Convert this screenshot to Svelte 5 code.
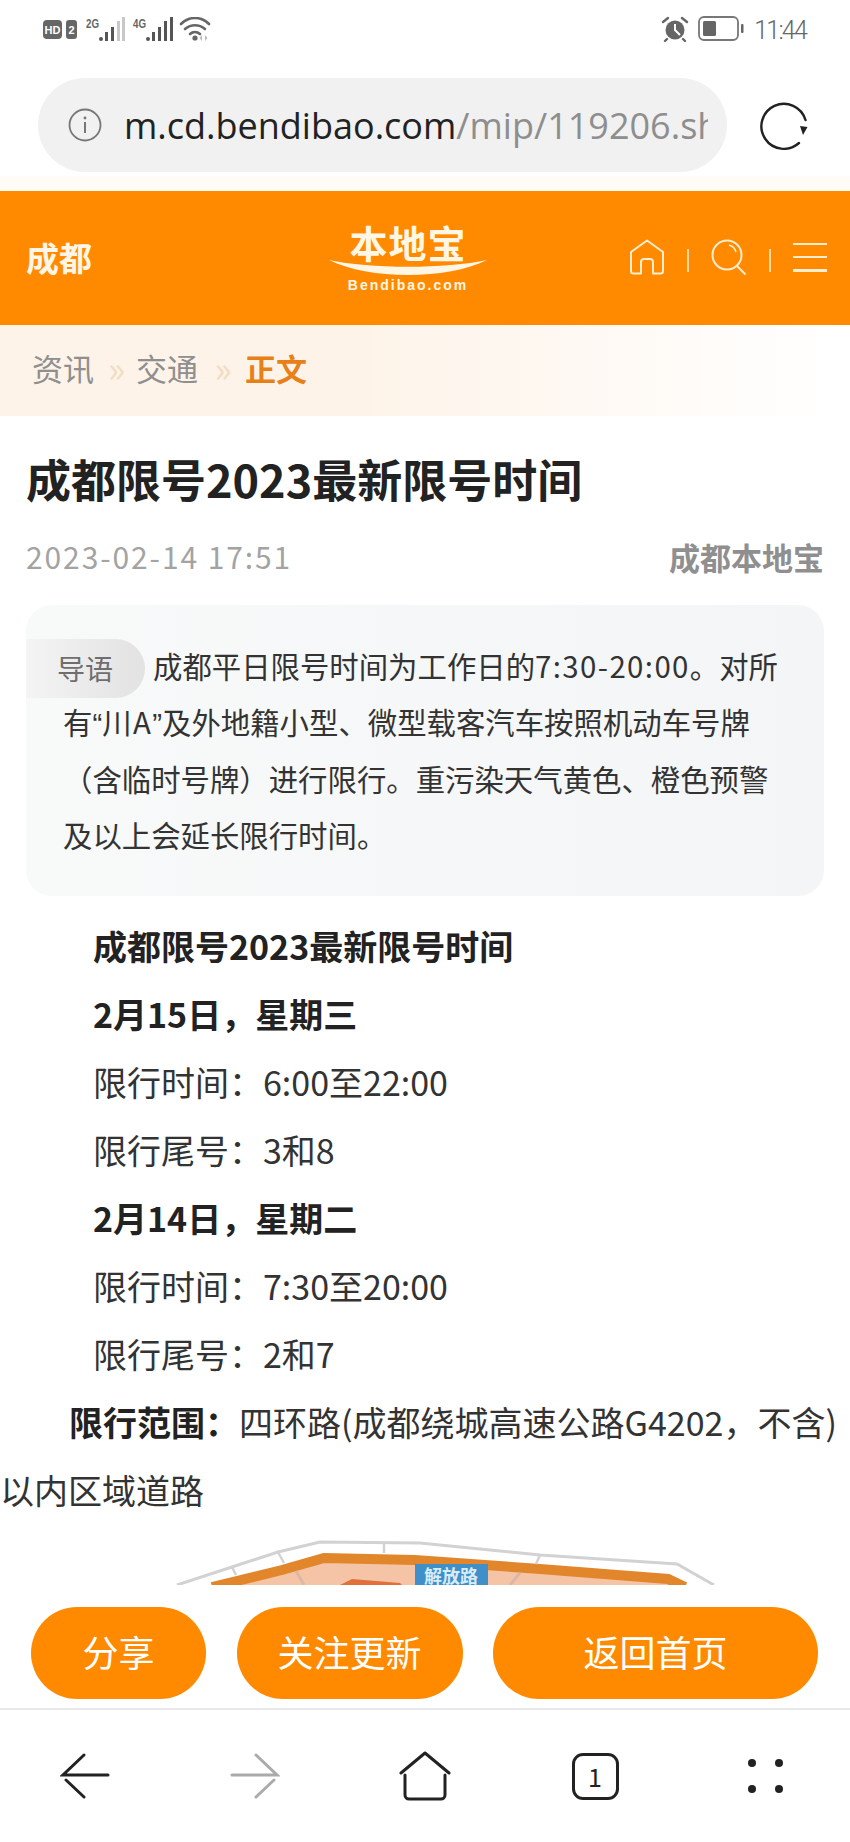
<script>
	const rows = [
		{ text: '成都限号2023最新限号时间', bold: true },
		{ text: '2月15日，星期三', bold: true },
		{ text: '限行时间：6:00至22:00' },
		{ text: '限行尾号：3和8' },
		{ text: '2月14日，星期二', bold: true },
		{ text: '限行时间：7:30至20:00' },
		{ text: '限行尾号：2和7' }
	];
	const actions = [
		{ label: '分享', width: 175 },
		{ label: '关注更新', width: 226 },
		{ label: '返回首页', width: 325 }
	];
</script>

<div class="phone">
	<div class="status">
		<div class="status-left">
			<svg width="170" height="26" viewBox="0 0 170 26">
				<rect x="0" y="3" width="19" height="19" rx="4" fill="#666" />
				<text x="9.5" y="17" class="hd">HD</text>
				<rect x="23" y="3" width="11" height="19" rx="3" fill="#666" />
				<text x="28.5" y="17" class="hd">2</text>
				<text x="43" y="11" class="net" textLength="13" lengthAdjust="spacingAndGlyphs">2G</text>
				<g fill="#555">
					<circle cx="58" cy="22" r="2" />
					<rect x="62" y="15" width="3" height="9" />
					<rect x="68" y="10" width="3" height="14" />
				</g>
				<g fill="#c8c8c8">
					<rect x="74" y="4" width="3" height="20" />
					<rect x="79" y="0" width="3" height="24" />
				</g>
				<text x="90" y="11" class="net" textLength="13" lengthAdjust="spacingAndGlyphs">4G</text>
				<g fill="#555">
					<circle cx="105" cy="22" r="2" />
					<rect x="109" y="15" width="3" height="9" />
					<rect x="115" y="10" width="3" height="14" />
					<rect x="121" y="4" width="3" height="20" />
					<rect x="127" y="0" width="3" height="24" />
				</g>
				<g fill="none" stroke="#666" stroke-width="2.6" stroke-linecap="round">
					<path d="M138 7 C146 -1 158 -1 166 7" />
					<path d="M142 12 C148 7 156 7 162 12" />
					<path d="M147 17 C150 14.5 154 14.5 157 17" />
				</g>
				<circle cx="152" cy="21" r="2.6" fill="#666" />
				<path d="M159 18 L156.500 21 L159 24 Z M162 18 L164.500 21 L162 24 Z" fill="#bbb" />
			</svg>
		</div>
		<div class="status-right">
			<svg width="28" height="26" viewBox="0 0 28 26">
				<circle cx="14" cy="14" r="9.500" fill="#666" />
				<path d="M14 8 V14 L19 19" fill="none" stroke="#fff" stroke-width="2" />
				<path d="M2 6 L7 2 M26 6 L21 2 M6 23 L4 25 M22 23 L24 25" stroke="#666" stroke-width="2.400" stroke-linecap="round" />
			</svg>
			<svg width="47" height="25" viewBox="0 0 47 25">
				<rect x="1" y="1" width="39" height="23" rx="5" fill="none" stroke="#777" stroke-width="1.800" />
				<rect x="5" y="5" width="13" height="15" rx="1.500" fill="#666" />
				<rect x="43" y="8" width="2.500" height="9" rx="1" fill="#666" />
			</svg>
			<span class="clock">11:44</span>
		</div>
	</div>

	<div class="address-row">
		<div class="address">
			<svg width="34" height="34" viewBox="0 0 34 34">
				<circle cx="17" cy="17" r="15.500" fill="none" stroke="#777" stroke-width="1.800" />
				<rect x="16" y="14" width="2" height="11" fill="#777" />
				<circle cx="17" cy="10" r="1.400" fill="#777" />
			</svg>
			<div class="url"><span class="host">m.cd.bendibao.com</span>/mip/119206.shtm</div>
		</div>
		<svg class="reload" width="50" height="50" viewBox="0 0 50 50">
			<path d="M46.500 20 A22.500 22.500 0 1 0 40 43" fill="none" stroke="#222" stroke-width="2.400" stroke-linecap="round" />
			<path d="M41 26 L48.500 27 L44 35 Z" fill="#222" />
		</svg>
	</div>

	<div class="viewport">
		<header class="site-head">
			<div class="city">成都</div>
			<div class="logo">
				<div class="logo-name">本地宝</div>
				<svg class="logo-arc" width="158" height="15" viewBox="0 0 158 15">
					<path d="M0 0 C40 9 118 9 158 0 C118 20 40 20 0 0 Z" fill="#fff6e6" />
				</svg>
				<div class="logo-domain">Bendibao.com</div>
			</div>
			<nav class="head-icons">
				<svg width="36" height="36" viewBox="0 0 36 36" fill="none" stroke="#ffedd0" stroke-width="2">
					<path d="M2 13 L18 1.500 L34 13 V32 A2.500 2.500 0 0 1 31.500 34.500 H24 V23 A3 3 0 0 0 21 20 H15 A3 3 0 0 0 12 23 V34.500 H4.500 A2.500 2.500 0 0 1 2 32 Z" stroke-linejoin="round" />
				</svg>
				<i class="sep"></i>
				<svg width="36" height="36" viewBox="0 0 36 36" fill="none" stroke="#ffedd0" stroke-width="2">
					<circle cx="16" cy="16" r="14.500" />
					<path d="M26 27 L34.500 35.500" />
					<path d="M18 6 A10 10 0 0 1 25 13" stroke-width="1.600" />
				</svg>
				<i class="sep"></i>
				<div class="burger"><b></b><b></b><b></b></div>
			</nav>
		</header>

		<div class="crumbs">
			<span>资讯</span><span class="arrow">»</span><span>交通</span><span class="arrow">»</span><span class="now">正文</span>
		</div>

		<article>
			<h1>成都限号2023最新限号时间</h1>
			<div class="meta">
				<span class="date">2023-02-14 17:51</span>
				<span class="source">成都本地宝</span>
			</div>
			<div class="lead"><span class="tag">导语</span>成都平日限号时间为工作日的<span class="num">7:30-20:00</span>。对所有<span class="quote">“</span><span class="num">川A</span><span class="quote">”</span>及外地籍小型、微型载客汽车按照机动车号牌（含临时号牌）进行限行。重污染天气黄色、橙色预警及以上会延长限行时间。</div>

			<div class="body">
				{#each rows as row}
					<p class="row" class:strong={row.bold}>{row.text}</p>
				{/each}
				<p class="range"><b>限行范围：</b>四环路(成都绕城高速公路G4202，不含)以内区域道路</p>
			</div>

			<svg class="map" width="850" height="60" viewBox="0 0 850 60">
				<path d="M212 62 L282 45 L324 33 L415 35 L540 44 L668 54 L685 62 Z" fill="#f5c4a6" />
				<path d="M177 60 L278 27 L320 17 L420 18 L540 30 L677 39 L714 60" fill="none" stroke="#d2d2d2" stroke-width="3" />
				<path d="M212 62 L282 45 L324 33 L415 35 L540 44 L668 54 L685 62" fill="none" stroke="#e2862c" stroke-width="10" />
				<path d="M232 42 L236 50 M278 27 L284 38 M384 18 L384 28 M540 30 L536 39" stroke="#d2d2d2" stroke-width="2.500" />
				<path d="M296 46 L304 60 M520 48 L510 60" stroke="#dcb8a4" stroke-width="3" />
				<path d="M340 60 L352 54 L400 58 L402 60 Z" fill="#e2703a" />
				<rect x="415" y="39" width="73" height="21" fill="#3f8fca" />
				<text x="451" y="58" class="map-label">解放路</text>
			</svg>
		</article>
	</div>

	<div class="actions">
		{#each actions as action}
			<button style="width: {action.width}px">{action.label}</button>
		{/each}
	</div>

	<div class="toolbar">
		<div class="tool">
			<svg width="50" height="46" viewBox="0 0 50 46" fill="none" stroke="#222" stroke-width="3" stroke-linecap="round">
				<path d="M24 2 L3 22 H48" />
				<path d="M6 27 L24 44" />
			</svg>
		</div>
		<div class="tool">
			<svg width="50" height="46" viewBox="0 0 50 46" fill="none" stroke="#aaa" stroke-width="3" stroke-linecap="round">
				<path d="M26 2 L47 22 H2" />
				<path d="M44 27 L26 44" />
			</svg>
		</div>
		<div class="tool">
			<svg width="52" height="50" viewBox="0 0 52 50" fill="none" stroke="#222" stroke-width="3" stroke-linecap="round" stroke-linejoin="round">
				<path d="M2 22 L26 2 L50 22" />
				<path d="M6 24 V44 A4 4 0 0 0 10 48 H42 A4 4 0 0 0 46 44 V24" />
			</svg>
		</div>
		<div class="tool">
			<div class="tabs">1</div>
		</div>
		<div class="tool">
			<div class="dots"><i></i><i></i><i></i><i></i></div>
		</div>
	</div>
</div>

<style>
	:global(body) {
		margin: 0;
		background: #fff;
	}

	.phone {
		width: 850px;
		height: 1842px;
		display: flex;
		flex-direction: column;
		overflow: hidden;
		background: #fff;
		font-family: "Noto Sans CJK SC", "Noto Sans", sans-serif;
		color: #333;
	}

	.status {
		height: 60px;
		display: flex;
		justify-content: space-between;
		align-items: center;
		padding: 0 44px 0 43px;
		flex: none;
	}

	.status-left svg {
		display: block;
	}

	.status-right {
		display: flex;
		align-items: center;
		gap: 9px;
		margin-top: -3px;
	}

	.clock {
		font-family: Roboto, sans-serif;
		font-weight: 300;
		font-size: 25px;
		letter-spacing: -1.800px;
		color: #666;
		margin-top: 3px;
	}

	.hd {
		font: 700 11px "Liberation Sans", sans-serif;
		fill: #fff;
		text-anchor: middle;
	}

	.net {
		font: 700 12px "Liberation Sans", sans-serif;
		fill: #666;
	}

	.address-row {
		height: 131px;
		flex: none;
		display: flex;
		align-items: flex-start;
		padding: 18px 0 0 38px;
		box-sizing: border-box;
		background: linear-gradient(#fff 116px, #fffcf8 116px);
	}

	.address {
		width: 689px;
		height: 94px;
		box-sizing: border-box;
		display: flex;
		align-items: center;
		gap: 22px;
		padding: 0 19px 0 30px;
		background: #f1f1f1;
		border-radius: 47px;
	}

	.url {
		flex: 1;
		overflow: hidden;
		white-space: nowrap;
		font-family: "Open Sans", sans-serif;
		font-size: 36px;
		color: #8e8e8e;
	}

	.host {
		color: #222;
	}

	.reload {
		margin: 22px 0 0 32px;
	}

	.viewport {
		height: 1394px;
		flex: none;
		overflow: hidden;
	}

	.site-head {
		height: 134px;
		background: #ff8a00;
		display: flex;
		align-items: center;
		justify-content: space-between;
		position: relative;
		padding: 0 23px 0 26px;
	}

	.city {
		color: #fff6e8;
		font-size: 33px;
		font-weight: 700;
		margin-top: -3px;
	}

	.logo {
		position: absolute;
		left: 329px;
		top: 30px;
		width: 158px;
		display: flex;
		flex-direction: column;
		align-items: center;
		color: #fff6e6;
	}

	.logo-name {
		font-size: 38px;
		line-height: 42px;
		font-weight: 700;
		letter-spacing: 1px;
	}

	.logo-arc {
		display: block;
		margin-top: -3px;
	}

	.logo-domain {
		font-family: "Liberation Sans", sans-serif;
		font-size: 14px;
		line-height: 16px;
		font-weight: 700;
		letter-spacing: 2px;
		margin-top: 2px;
	}

	.head-icons {
		display: flex;
		align-items: center;
		gap: 22px;
		margin-top: -2px;
	}

	.head-icons svg {
		display: block;
	}

	.sep {
		width: 2px;
		height: 23px;
		margin-top: 6px;
		background: #ffd9a0;
	}

	.burger {
		width: 34px;
		height: 29px;
		display: flex;
		flex-direction: column;
		justify-content: space-between;
	}

	.burger b {
		height: 2.500px;
		background: #ffedd0;
	}

	.crumbs {
		height: 91px;
		display: flex;
		align-items: center;
		padding: 0 0 6px 32px;
		box-sizing: border-box;
		font-size: 31px;
		color: #8f8f8f;
		background: linear-gradient(90deg, #fdf3e8 40%, #fff 100%);
	}

	.arrow {
		width: 42px;
		padding-left: 3px;
		box-sizing: border-box;
		text-align: center;
		color: #f2dcc2;
		font-size: 36px;
		line-height: 31px;
	}

	.arrow:nth-child(4) {
		width: 47px;
	}

	.now {
		color: #e8801a;
		font-weight: 700;
	}

	h1 {
		margin: 30px 0 0 26px;
		font-size: 45px;
		line-height: 66px;
		font-weight: 700;
		color: #222;
	}

	.meta {
		display: flex;
		justify-content: space-between;
		align-items: center;
		height: 44px;
		margin: 22px 26px 0;
	}

	.date {
		font-size: 30px;
		letter-spacing: 1.900px;
		color: #a3a3a3;
	}

	.source {
		font-size: 31px;
		font-weight: 700;
		color: #8f8f8f;
	}

	.lead {
		margin: 27px 26px 0;
		box-sizing: border-box;
		height: 291px;
		padding: 33px 34px 0 37px;
		font-size: 29.400px;
		line-height: 55.500px;
		color: #333;
		background: linear-gradient(90deg, #f8f9f9, #f4f5f6);
		border-radius: 26px;
	}

	.num {
		letter-spacing: 1.400px;
	}

	.quote {
		font-family: "Liberation Sans", sans-serif;
	}

	.tag {
		display: inline-block;
		width: 119px;
		height: 59px;
		line-height: 58px;
		margin: 1px 8px -8px -37px;
		vertical-align: top;
		box-sizing: border-box;
		padding-left: 31px;
		font-size: 28px;
		color: #6e6e6e;
		background: linear-gradient(90deg, #f4f4f4, #e2e2e2);
		border-radius: 0 30px 30px 0;
	}

	.body {
		margin-top: 16px;
	}

	.row,
	.range {
		margin: 0;
		font-size: 34px;
		line-height: 68px;
		color: #333;
	}

	.row {
		text-indent: 93px;
	}

	.strong {
		font-weight: 700;
		color: #222;
	}

	.range {
		text-indent: 69px;
	}

	.range b {
		color: #222;
	}

	.map {
		display: block;
		margin-top: 1px;
	}

	.map-label {
		font-size: 18px;
		font-weight: 700;
		fill: #d8ecf8;
		text-anchor: middle;
	}

	.actions {
		height: 125px;
		flex: none;
		box-sizing: border-box;
		padding: 22px 32px 0 31px;
		display: flex;
		justify-content: space-between;
		border-bottom: 2px solid #e6e8ea;
	}

	button {
		height: 92px;
		padding: 0 0 4px;
		border: 0;
		border-radius: 46px;
		background: #ff8a00;
		color: #fff;
		font-family: inherit;
		font-size: 36px;
	}

	.toolbar {
		flex: 1;
		display: flex;
	}

	.tool {
		flex: 1;
		display: flex;
		align-items: center;
		justify-content: center;
	}

	.tabs {
		width: 47px;
		height: 47px;
		box-sizing: border-box;
		border: 3px solid #222;
		border-radius: 11px;
		display: flex;
		align-items: center;
		justify-content: center;
		font-size: 25px;
		color: #222;
	}

	.dots {
		width: 35px;
		display: grid;
		grid-template-columns: 8px 8px;
		justify-content: space-between;
		row-gap: 18px;
	}

	.dots i {
		width: 8px;
		height: 8px;
		border-radius: 50%;
		background: #222;
	}
</style>
